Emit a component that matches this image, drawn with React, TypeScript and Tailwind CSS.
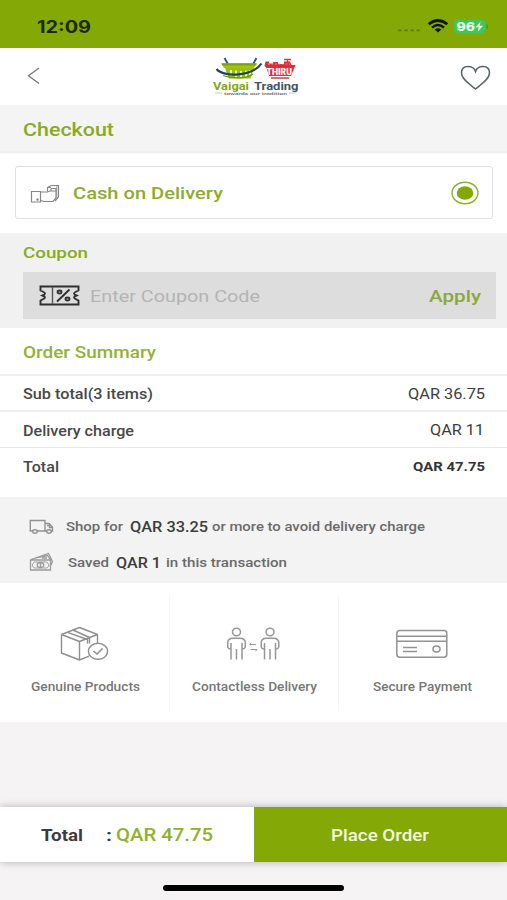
import { useLayoutEffect, useRef, useState } from "react";
import type { ReactNode } from "react";

/* Text set wide: the glyphs are stretched horizontally to fill the box. */
function Wide({ className, children }: { className: string; children: ReactNode }) {
  const box = useRef<HTMLSpanElement>(null);
  const inner = useRef<HTMLSpanElement>(null);
  const [ratio, setRatio] = useState(1.2);
  useLayoutEffect(() => {
    if (box.current && inner.current && inner.current.offsetWidth > 0) {
      setRatio(box.current.offsetWidth / inner.current.getBoundingClientRect().width * ratio);
    }
  }, []);
  return (
    <span ref={box} className={`block shrink-0 whitespace-nowrap ${className}`}>
      <span ref={inner} className="mt-[2px] inline-block origin-left" style={{ transform: `scaleX(${ratio})` }}>
        {children}
      </span>
    </span>
  );
}

function Logo() {
  return (
    <svg width="90" height="40" viewBox="210 56 90 40" fill="none">
      <path d="M224.5 58 229 66M256.500 58 252 66" stroke="#35506b" strokeWidth="1.800" />
      <path d="M221.500 63.500H256.500L254 68H224Z" fill="#a3c511" />
      <path d="M221.500 63.300H256.500V65.500H222Z" fill="#7fa30b" />
      <path d="M225 68H254L250.500 78.500H229Z" fill="#9abf12" />
      <path d="M231 70V76M236 70.500V77M241 71V77M246 70.500V77M250 70V75" stroke="#f4f8d8" strokeWidth="1.700" />
      <path d="M216.500 69C224 78 253 76 261.500 63.500" stroke="#24435f" strokeWidth="2.200" />
      <path d="M223 75.500C233 79 246 79 253 74" stroke="#6f9710" strokeWidth="1.200" />
      <path d="M264.500 66 265.500 61.500H269V63.500H273V62H278V64H284V61.500H290L291.500 65H295.500L291 76H269L266.500 68Z" fill="#d62f39" />
      <path d="M284 59.500H291M287.500 59V63M271 78H289" stroke="#c4444b" strokeWidth="1.300" />
      <path d="M268 64H290" stroke="#f3b8ba" strokeWidth=".7" strokeDasharray="2 1.500" />
      <text x="266.500" y="74.500" textLength="25.500" lengthAdjust="spacingAndGlyphs" fontFamily="Roboto, sans-serif" fontSize="8.500" fontWeight="900" fill="#fff">THIRU</text>
      <text x="213" y="90" textLength="36" lengthAdjust="spacingAndGlyphs" fontFamily="Roboto, sans-serif" fontSize="11" fontWeight="700" fill="#88a51d">Vaigai</text>
      <text x="254" y="90" textLength="44.500" lengthAdjust="spacingAndGlyphs" fontFamily="Roboto, sans-serif" fontSize="11" fontWeight="700" fill="#3d5668">Trading</text>
      <text x="224" y="94.500" textLength="63" lengthAdjust="spacingAndGlyphs" fontFamily="Roboto, sans-serif" fontSize="4" fontWeight="500" fill="#5d6b70">towards our tradition</text>
      <path d="M215 93H222M289 93H296" stroke="#9aa5a8" strokeWidth=".6" />
    </svg>
  );
}

function StatusIcons() {
  return (
    <svg width="94" height="24" viewBox="395 14 94 24" fill="none">
      <path d="M398 30.300H420" stroke="#5f7d0b" strokeWidth="1.800" strokeDasharray="3.500 2.700" />
      <path d="M428.800 24.300Q438 16.700 447.200 24.300" stroke="#111" strokeWidth="2.700" />
      <path d="M432 27.600Q438 22.600 444 27.600" stroke="#111" strokeWidth="2.400" />
      <path d="M434.600 29.600Q438 26.800 441.400 29.600L438 32.500Z" fill="#111" />
      <rect x="454" y="19.500" width="31" height="14" rx="4" fill="#3fc65a" />
      <path d="M486.300 24V29Q488.300 28.500 488.300 26.500T486.300 24Z" fill="#55960e" />
      <text x="456.500" y="31" textLength="18.500" lengthAdjust="spacingAndGlyphs" fontFamily="Inter, sans-serif" fontSize="11.500" fontWeight="800" fill="#f4fff0">96</text>
      <path d="M480.500 21.500 475.500 27.300H478.800L477.800 31.500 483 25.700H479.700Z" fill="#f4fff0" />
    </svg>
  );
}

function HandCashIcon() {
  return (
    <svg width="30" height="22" viewBox="29 182 30 22" fill="none" stroke="#868686" strokeWidth="1.200">
      <path d="M30.500 191.500H39.500V202H30.500ZM39.500 192H46.500L49 191H55V198L52 201.500H43L39.500 200.500" />
      <path d="M46.500 191.500V187.500L50 185.500H57.500V197L54 201M50 188.500H55V191M50 188.500V191M46.500 187.500H50" />
      <path d="M55.800 186V197.500" strokeWidth=".8" />
      <circle cx="36.500" cy="199.500" r=".6" />
    </svg>
  );
}

function CouponIcon() {
  return (
    <svg width="42" height="22" viewBox="39 285 42 22" fill="none" stroke="#303030">
      <path d="M40.500 286.500H78.500V290.500Q74 292.500 74 293.500T76.500 295.500Q74 296.500 74 297.500T78.500 300.500V304.500H40.500V300.500Q45 298.500 45 297.500T42.500 295.500Q45 294.500 45 293.500T40.500 290.500Z" strokeWidth="1.900" />
      <path d="M52.500 287V304" strokeWidth="1.400" stroke="#555" />
      <path d="M69.500 289.500 57 301.500" strokeWidth="1.900" />
      <ellipse cx="59.500" cy="292" rx="2" ry="1.500" strokeWidth="1.800" />
      <ellipse cx="67.500" cy="299" rx="2" ry="1.500" strokeWidth="1.800" />
    </svg>
  );
}

function TruckIcon() {
  return (
    <svg width="26" height="18" viewBox="28 518 26 18" fill="none" stroke="#929292" strokeWidth="1.400">
      <path d="M33 532H30.300V521.500H45V532H37M45 524.500H49L52.500 528V532H51M45 532H47M47 526.500H49.500V528.500H52" />
      <ellipse cx="35" cy="532.500" rx="2.300" ry="1.700" />
      <ellipse cx="49" cy="532.500" rx="2.300" ry="1.700" />
    </svg>
  );
}

function MoneyIcon() {
  return (
    <svg width="26" height="20" viewBox="28 554 26 20" fill="none" stroke="#9a9a9a" strokeWidth="1.300">
      <path d="M30.500 562H50.500V572H30.500ZM31 561.500 48.500 555.500 52.500 563.500 51 567M35 560 47.500 557.500 50.500 562" />
      <path d="M34 564Q34 565.500 32.500 566V568.500Q34 569 34 570H47Q47 569 48.700 568.500V566Q47 565.500 47 564Z" strokeWidth=".9" />
      <ellipse cx="40.500" cy="567" rx="3.300" ry="2.500" />
      <path d="M40.500 565V569.500M42 560H47" />
    </svg>
  );
}

function BoxIcon() {
  return (
    <svg width="52" height="40" viewBox="60 624 52 40" fill="none" stroke="#8f8f8f" strokeWidth="1.400" strokeLinejoin="round">
      <path d="M62.500 634.500 80.500 627.500 98.500 634.500V643M62.500 634.500 80.500 641.500 98.500 634.500M62.500 634.500V653L80.500 660V641.500M80.500 660 90 656.200" />
      <path d="M68.500 632.300 88.500 639.500V643.500M74 630 90.500 637.500V643.500" />
      <ellipse cx="99" cy="651.300" rx="9.600" ry="8" fill="#fff" />
      <path d="M94.500 651 98 654 103.500 648.500" strokeWidth="1.600" />
    </svg>
  );
}

function Person() {
  return (
    <g>
      <ellipse cx="237.500" cy="632" rx="4" ry="3.800" />
      <path d="M232 659.500V643M232 649Q229 649 228.700 646.500V642.500Q229 638.200 234 638.200H241Q246 638.200 246.300 642.500V646.500Q246 649 243 649M243 643V659.500M237.500 649V659.500" />
    </g>
  );
}

function PeopleIcon() {
  return (
    <svg width="58" height="40" viewBox="226 624 58 40" fill="none" stroke="#969696" strokeWidth="1.500">
      <Person />
      <g transform="translate(33.500 0)">
        <Person />
      </g>
      <path d="M250.500 644.500H257M252 642.800 250.500 644.500M251.500 649.500H258M256.500 651.200 258 649.500" strokeWidth="1" />
    </svg>
  );
}

function CardIcon() {
  return (
    <svg width="54" height="40" viewBox="395 624 54 40" fill="none" stroke="#929292" strokeWidth="1.500">
      <rect x="396.800" y="630.500" width="50" height="26.800" rx="3" />
      <path d="M397 636.300H447M397 641.300H447M403 647.500H417M403 651.500H417" />
      <ellipse cx="436.500" cy="649" rx="3.500" ry="3" />
    </svg>
  );
}

function SummaryRow({ children, className }: { children: ReactNode; className: string }) {
  return <div className={`flex items-center justify-between pr-[22px] pl-[23px] text-[#484848] ${className}`}>{children}</div>;
}

export default function App() {
  return (
    <main className="flex h-[900px] w-[507px] flex-col overflow-hidden bg-[#f5f3f4] font-['Roboto',sans-serif]">
      <header className="shrink-0">
        <div className="flex h-12 items-center justify-between bg-[#84a906] pt-1 pr-[18px] pl-[37px]">
          <Wide className="w-[54px] pt-[2px] font-['Inter',sans-serif] text-[17px] font-bold text-[#1b2904]">12:09</Wide>
          <StatusIcons />
        </div>
        <div className="flex h-[57px] items-center justify-between bg-white pr-4 pl-[26px]">
          <svg width="15" height="18" viewBox="26 67 15 18" fill="none" className="mt-[-2px]">
            <path d="M39 68 28.500 75.700 39 83.500" stroke="#777" strokeWidth="1.300" />
          </svg>
          <div className="mt-[-2px] ml-[10px]">
            <Logo />
          </div>
          <svg width="32" height="26" viewBox="459 63 32 26" fill="none">
            <path d="M475.500 88C470 83.500 461.500 78 461.500 72 461.500 67.500 464.500 65.500 468 65.500 471.500 65.500 474.500 67.500 475.500 70.500 476.500 67.500 479.500 65.500 483 65.500 486.500 65.500 489.500 67.500 489.500 72 489.500 78 481 83.500 475.500 88Z" stroke="#58656b" strokeWidth="1.500" />
          </svg>
        </div>
      </header>

      <div className="flex h-12 shrink-0 items-center border-b-2 border-[#f0f0f0] bg-[#f4f4f4] pt-[2px] pl-[23px]">
        <Wide className="w-[91px] text-[17.500px] font-medium text-[#89aa24]">Checkout</Wide>
      </div>

      <section className="flex h-20 shrink-0 items-start bg-white pt-[13px] pl-[15px]">
        <div className="flex h-[53px] w-[478px] items-center rounded-[3px] border border-[#dfdfdb] pr-[13px] pl-[14px]">
          <HandCashIcon />
          <Wide className="ml-[13px] w-[150px] text-[17px] font-medium text-[#8dac30]">Cash on Delivery</Wide>
          <svg width="28" height="24" viewBox="0 0 28 24" fill="none" className="ml-auto">
            <ellipse cx="14" cy="12" rx="13" ry="10.800" stroke="#91ad3b" strokeWidth="1.400" />
            <ellipse cx="14" cy="12" rx="8.300" ry="6.800" fill="#84a906" />
          </svg>
        </div>
      </section>

      <section className="h-[95px] shrink-0 bg-[#f1f1f1] pt-[7px] pl-[23px]">
        <Wide className="h-8 w-[65px] text-[15.500px] leading-[22px] font-medium text-[#89aa24]">Coupon</Wide>
        <div className="flex h-[47px] w-[473px] items-center bg-[#dddddd] pr-[15px] pl-4">
          <CouponIcon />
          <Wide className="ml-[9px] w-[170px] text-[16px] text-[#b4b4b4]">Enter Coupon Code</Wide>
          <Wide className="ml-auto w-[52px] text-[17px] font-medium text-[#8aa83a]">Apply</Wide>
        </div>
      </section>

      <section className="h-[169px] shrink-0 bg-white">
        <div className="flex h-12 items-center border-b-2 border-[#f0f0f0] pt-px pl-[23px]">
          <Wide className="w-[133px] text-[16px] font-medium text-[#93b13a]">Order Summary</Wide>
        </div>
        <SummaryRow className="h-9 border-b-2 border-[#eeeeee] pt-px">
          <Wide className="w-[130px] text-[14px] font-medium">Sub total(3 items)</Wide>
          <Wide className="w-[77px] text-[14.500px] text-[#3c3c3c]">QAR 36.75</Wide>
        </SummaryRow>
        <SummaryRow className="h-9 border-b border-[#e9e9e9] pt-px">
          <Wide className="w-[111px] text-[14px] font-medium">Delivery charge</Wide>
          <Wide className="mr-[1px] w-[54px] text-[14.500px] text-[#3c3c3c]">QAR 11</Wide>
        </SummaryRow>
        <SummaryRow className="h-9">
          <Wide className="w-[36px] text-[14px] font-medium">Total</Wide>
          <Wide className="w-[72px] text-[13px] font-bold text-[#333]">QAR 47.75</Wide>
        </SummaryRow>
      </section>

      <section className="h-[86px] shrink-0 bg-[#f3f3f3] pt-[11px] pl-7 text-[13px] font-medium text-[#6a6a6a]">
        <div className="flex h-9 items-center">
          <TruckIcon />
          <Wide className="ml-3 w-[57px]">Shop for</Wide>
          <Wide className="ml-[7px] w-[78px] text-[14px] text-[#3c3c3c]">QAR 33.25</Wide>
          <Wide className="ml-[4px] w-[213px]">or more to avoid delivery charge</Wide>
        </div>
        <div className="flex h-9 items-center">
          <MoneyIcon />
          <Wide className="ml-[14px] w-[41px]">Saved</Wide>
          <Wide className="ml-[7px] w-[45px] text-[14px] text-[#3c3c3c]">QAR 1</Wide>
          <Wide className="ml-[5px] w-[121px]">in this transaction</Wide>
        </div>
      </section>

      <section className="flex h-[139px] shrink-0 items-center bg-white text-[12px] font-medium text-[#777]">
        <div className="flex h-[116px] w-[170px] flex-col items-center border-r border-[#f5f5f5] pt-[29px] pl-px">
          <BoxIcon />
          <Wide className="mt-[12px] w-[109px]">Genuine Products</Wide>
        </div>
        <div className="flex h-[116px] w-[169px] flex-col items-center border-r border-[#f5f5f5] pt-[29px]">
          <PeopleIcon />
          <Wide className="mt-[12px] w-[125px]">Contactless Delivery</Wide>
        </div>
        <div className="flex h-[116px] w-[168px] flex-col items-center pt-[29px] pr-[2px]">
          <CardIcon />
          <Wide className="mt-[12px] w-[99px]">Secure Payment</Wide>
        </div>
      </section>

      <footer className="mt-auto h-[93px] shrink-0">
        <div className="flex h-[55px] shadow-[0_0_8px_rgba(0,0,0,0.28)]">
          <div className="flex w-[254px] items-center bg-white pl-[41px]">
            <Wide className="w-[42px] text-[16px] font-bold text-[#3c3c3c]">Total</Wide>
            <Wide className="ml-[23px] w-[6px] text-[16px] font-bold text-[#3c3c3c]">:</Wide>
            <Wide className="ml-[4px] w-[97px] text-[17.500px] font-medium text-[#91b030]">QAR 47.75</Wide>
          </div>
          <button className="flex w-[253px] items-center bg-[#84a906] pt-px pl-[77px] text-left">
            <Wide className="w-[98px] text-[16.500px] font-medium text-[#f6fadc]">Place Order</Wide>
          </button>
        </div>
        <div className="mx-auto mt-[23px] h-[6px] w-[181px] rounded-full bg-black" />
      </footer>
    </main>
  );
}
